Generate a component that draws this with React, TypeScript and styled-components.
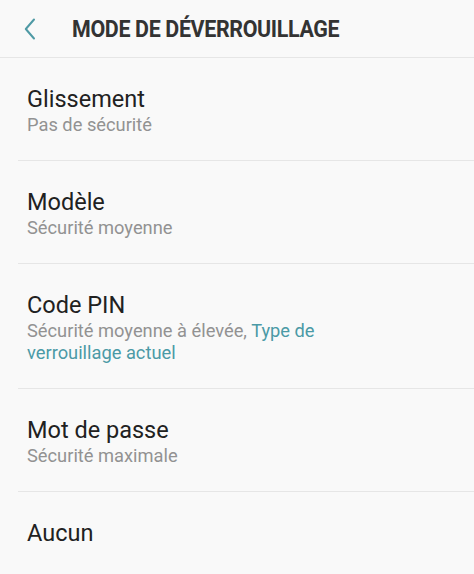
import React from 'react'
import styled, { createGlobalStyle } from 'styled-components'

const GlobalStyle = createGlobalStyle`
  html, body {
    margin: 0;
    padding: 0;
    background: #f9f9f9;
  }
  body {
    font-family: Roboto, 'Liberation Sans', sans-serif;
  }
`

const Screen = styled.div`
  width: 474px;
  height: 574px;
  background: #f9f9f9;
  overflow: hidden;
`

const Header = styled.div`
  display: flex;
  align-items: center;
  height: 57px;
  border-bottom: 1px solid #e6e6e6;
  padding-left: 24px;
  box-sizing: content-box;
`

const BackButton = styled.div`
  display: flex;
  align-items: center;
  width: 48px;
  height: 24px;
`

const Title = styled.h1`
  margin: 0;
  font-family: Roboto, 'Liberation Sans', sans-serif;
  font-weight: 700;
  font-size: 24px;
  color: #333333;
  letter-spacing: -0.4px;
  transform: scaleX(0.893);
  transform-origin: left center;
  white-space: nowrap;
`

const List = styled.div`
  display: flex;
  flex-direction: column;
  margin-left: 18px;
`

const Row = styled.div<{ last?: boolean }>`
  padding: 26px 18px 24px 9px;
  border-bottom: ${p => (p.last ? 'none' : '1px solid #e6e6e6')};
`

const ItemTitle = styled.div`
  font-size: 23.5px;
  line-height: 30px;
  color: #212121;
`

const ItemSub = styled.div`
  font-size: 18.3px;
  line-height: 22px;
  color: #929292;
`

const SubLine = styled.div`
  white-space: nowrap;
`

const Current = styled.span`
  color: #4b9aa6;
`

interface Mode {
  title: string
  sub?: string
  current?: boolean
}

const modes: Mode[] = [
  { title: 'Glissement', sub: 'Pas de sécurité' },
  { title: 'Modèle', sub: 'Sécurité moyenne' },
  { title: 'Code PIN', sub: 'Sécurité moyenne à élevée', current: true },
  { title: 'Mot de passe', sub: 'Sécurité maximale' },
  { title: 'Aucun' },
]

export default function App() {
  return (
    <Screen>
      <GlobalStyle />
      <Header>
        <BackButton>
          <svg width="12" height="22" viewBox="0 0 12 22">
            <path d="M10 1.5 L1.8 11 L10 20.5" fill="none" stroke="#4f9aa5" strokeWidth="2" strokeLinecap="round" strokeLinejoin="round" />
          </svg>
        </BackButton>
        <Title>MODE DE DÉVERROUILLAGE</Title>
      </Header>
      <List>
        {modes.map((m, i) => (
          <Row key={m.title} last={i === modes.length - 1}>
            <ItemTitle>{m.title}</ItemTitle>
            {m.sub && !m.current && <ItemSub>{m.sub}</ItemSub>}
            {m.sub && m.current && (
              <ItemSub>
                <SubLine>
                  {m.sub}, <Current>Type de</Current>
                </SubLine>
                <SubLine>
                  <Current>verrouillage actuel</Current>
                </SubLine>
              </ItemSub>
            )}
          </Row>
        ))}
      </List>
    </Screen>
  )
}
